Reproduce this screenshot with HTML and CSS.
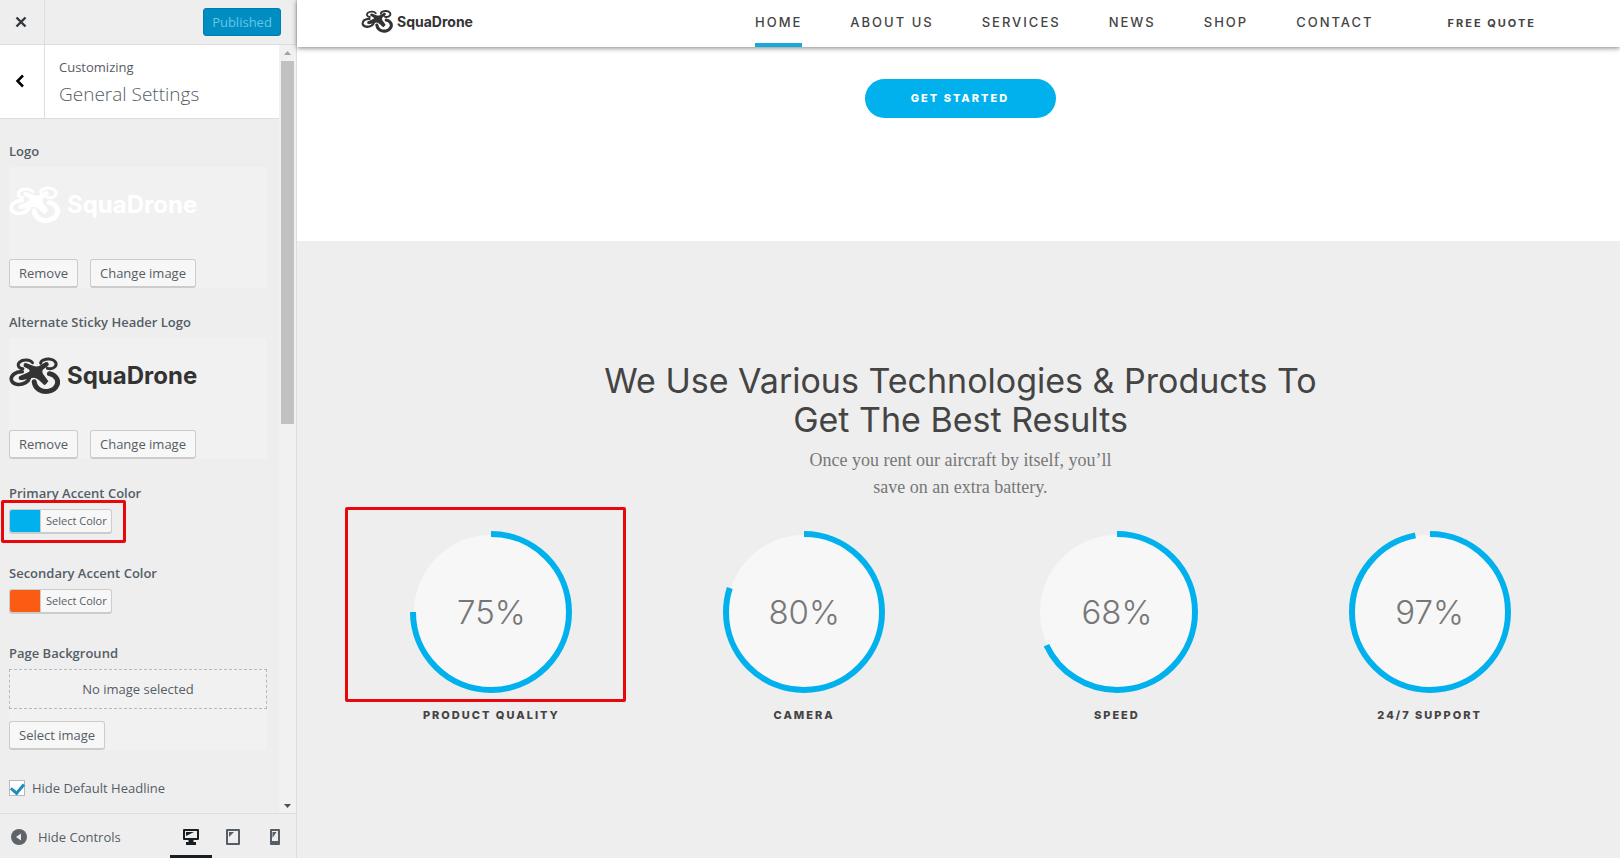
FILE: index.html
```html
<!DOCTYPE html>
<html lang="en">
<head>
<meta charset="utf-8">
<title>Customize: SquaDrone</title>
<link rel="stylesheet" href="styles.css">
</head>
<body>
<svg class="defs" aria-hidden="true">
  <symbol id="drone" viewBox="10 16 154 112">
    <g fill="none" stroke="currentColor" stroke-linecap="round" stroke-linejoin="round">
      <path stroke-width="9" d="M81 32C74 22 52 21 42 30C34 38 38 49 52 50"/>
      <path stroke-width="9" d="M106 34C104 26 119 20 133 21C151 23 157 36 148 45C143 50 134 51 126 49"/>
      <path stroke-width="11" d="M50 59C30 58 15 70 17 83C20 98 43 102 60 92C66 88 70 84 71 79"/>
      <path stroke-width="15" d="M132 65C152 69 162 86 154 101C146 119 118 124 101 113C92 107 87 98 86 89"/>
      <path stroke-width="12" d="M60 39L84 53M124 36L101 53M45 78L82 61M119 91L98 64"/>
    </g>
    <path fill="currentColor" d="M64 34L83 41Q94 46 104 40L121 30L129 40L114 51Q108 57 113 66L129 88L117 100L101 85Q91 75 80 78L48 85L41 73L66 64Q77 58 69 50L54 43Z"/>
  </symbol>
</svg>
<div class="app">
  <aside class="sidebar">
    <header class="bar">
      <button class="close" aria-label="Close"><svg width="12" height="12" viewBox="0 0 12 12"><path d="M1.500 1.500l9 9M10.500 1.500l-9 9" stroke="#32373c" stroke-width="2.400"/></svg></button>
      <button class="published" disabled>Published</button>
    </header>
    <div class="panel">
      <div class="controls">
        <div class="panel-title">
          <button class="back" aria-label="Back"><svg width="10" height="14" viewBox="0 0 10 14"><path d="M8 1.500L2.500 7L8 12.500" fill="none" stroke="#000" stroke-width="2.500"/></svg></button>
          <h1><span>Customizing</span>General Settings</h1>
        </div>
        <div class="list">
          <section class="control">
            <h2>Logo</h2>
            <div class="media">
              <div class="brand brand-light"><svg class="mark"><use href="#drone"/></svg><span>SquaDrone</span></div>
              <div class="actions"><button class="btn">Remove</button><button class="btn">Change image</button></div>
            </div>
          </section>
          <section class="control">
            <h2>Alternate Sticky Header Logo</h2>
            <div class="media">
              <div class="brand"><svg class="mark"><use href="#drone"/></svg><span>SquaDrone</span></div>
              <div class="actions"><button class="btn">Remove</button><button class="btn">Change image</button></div>
            </div>
          </section>
          <section class="control">
            <h2>Primary Accent Color</h2>
            <div class="picker"><button class="color"><span class="swatch blue"></span>Select Color</button><i class="outline"></i></div>
          </section>
          <section class="control">
            <h2>Secondary Accent Color</h2>
            <div class="picker"><button class="color"><span class="swatch orange"></span>Select Color</button></div>
          </section>
          <section class="control">
            <h2>Page Background</h2>
            <div class="media">
              <div class="placeholder">No image selected</div>
              <button class="btn">Select image</button>
            </div>
          </section>
          <label class="check" for="headline"><input type="checkbox" id="headline" checked>Hide Default Headline</label>
        </div>
      </div>
      <div class="scrollbar" aria-hidden="true">
        <svg width="7" height="4" viewBox="0 0 7 4"><path d="M0 4L3.500 0L7 4z" fill="#a3a3a3"/></svg>
        <div class="thumb"></div>
        <svg width="7" height="4" viewBox="0 0 7 4"><path d="M0 0h7L3.500 4z" fill="#505050"/></svg>
      </div>
    </div>
    <footer class="footer">
      <button class="collapse"><svg width="16" height="16" viewBox="0 0 16 16"><circle cx="8" cy="8" r="8" fill="#5f646a"/><path d="M10 4.500v7L5 8z" fill="#eee"/></svg>Hide Controls</button>
      <div class="devices">
        <button class="device active" aria-label="Desktop"><svg width="16" height="16" viewBox="0 0 16 16"><path fill="#191e23" fill-rule="evenodd" d="M1 0h14q1 0 1 1v9q0 1-1 1h-4.500v2H13v3H3v-3h2.500v-2H1q-1 0-1-1V1q0-1 1-1zM2 2v7h12V2z"/><path d="M3 3h8L3 7z" fill="#191e23"/></svg></button>
        <button class="device" aria-label="Tablet"><svg width="16" height="16" viewBox="0 0 16 16"><path fill="#555d66" fill-rule="evenodd" d="M2 0h12q1 0 1 1v14q0 1-1 1H2q-1 0-1-1V1q0-1 1-1zM3 2v12h10V2z"/><path d="M4 3h5L4 8z" fill="#555d66"/></svg></button>
        <button class="device" aria-label="Mobile"><svg width="16" height="16" viewBox="0 0 16 16"><path fill="#555d66" fill-rule="evenodd" d="M4 0h8q1 0 1 1v14q0 1-1 1H4q-1 0-1-1V1q0-1 1-1zM5 2v10h6V2z"/><path d="M5.500 3h4L5.500 9z" fill="#555d66"/></svg></button>
      </div>
    </footer>
  </aside>
  <main class="preview">
    <header class="site-header">
      <a class="brand brand-small" href="#"><svg class="mark"><use href="#drone"/></svg><span>SquaDrone</span></a>
      <nav>
        <a class="current" href="#">Home</a><a href="#">About us</a><a href="#">Services</a><a href="#">News</a><a href="#">Shop</a><a href="#">Contact</a>
      </nav>
      <a class="quote" href="#">Free quote</a>
    </header>
    <section class="hero"><a class="cta" href="#">Get started</a></section>
    <section class="stats">
      <h2>We Use Various Technologies &amp; Products To<br>Get The Best Results</h2>
      <p>Once you rent our aircraft by itself, you’ll<br>save on an extra battery.</p>
      <div class="charts">
        <figure>
          <div class="ring"><svg viewBox="0 0 162 162"><circle class="disc" cx="81" cy="81" r="77"/><circle class="arc" cx="81" cy="81" r="78" transform="rotate(-90 81 81)" pathLength="100" stroke-dasharray="75 25"/></svg><span>75%</span></div>
          <figcaption>Product quality</figcaption><i class="outline"></i>
        </figure>
        <figure>
          <div class="ring"><svg viewBox="0 0 162 162"><circle class="disc" cx="81" cy="81" r="77"/><circle class="arc" cx="81" cy="81" r="78" transform="rotate(-90 81 81)" pathLength="100" stroke-dasharray="80 20"/></svg><span>80%</span></div>
          <figcaption>Camera</figcaption>
        </figure>
        <figure>
          <div class="ring"><svg viewBox="0 0 162 162"><circle class="disc" cx="81" cy="81" r="77"/><circle class="arc" cx="81" cy="81" r="78" transform="rotate(-90 81 81)" pathLength="100" stroke-dasharray="68 32"/></svg><span>68%</span></div>
          <figcaption>Speed</figcaption>
        </figure>
        <figure>
          <div class="ring"><svg viewBox="0 0 162 162"><circle class="disc" cx="81" cy="81" r="77"/><circle class="arc" cx="81" cy="81" r="78" transform="rotate(-90 81 81)" pathLength="100" stroke-dasharray="97 3"/></svg><span>97%</span></div>
          <figcaption>24/7 support</figcaption>
        </figure>
      </div>
    </section>
  </main>
</div>
</body>
</html>
```
FILE: styles.css
```css
* { box-sizing: border-box; }
body { margin: 0; font: 13px/24px "Open Sans", "Noto Sans", sans-serif; color: #555d66; }
button { font: inherit; color: inherit; margin: 0; padding: 0; border: 0; background: none; }
h1, h2, p, figure { margin: 0; font-weight: 400; }
a { color: inherit; text-decoration: none; }
svg { display: block; }
.defs { position: absolute; width: 0; height: 0; }
.app { display: flex; min-height: 100vh; }

.sidebar { width: 297px; flex: none; display: flex; flex-direction: column; background: #eee; border-right: 1px solid #ddd; }
.bar { display: flex; justify-content: space-between; align-items: center; height: 45px; padding-right: 15px; border-bottom: 1px solid #ddd; }
.close { width: 45px; height: 44px; display: grid; place-items: center; padding-right: 3px; border-right: 1px solid #ddd; }
.published { width: 78px; height: 28px; background: #008ec2; border: 1px solid #007cb2; border-radius: 3px; color: #66c6e4; }
.panel { flex: 1; display: flex; }
.controls { flex: 1; }
.panel-title { display: flex; height: 74px; background: #fff; border-bottom: 1px solid #ddd; }
.back { width: 45px; display: grid; place-items: center; padding-right: 4px; padding-bottom: 2px; border-right: 1px solid #ddd; }
.panel-title h1 { padding: 10px 0 0 14px; font-size: 19px; line-height: 30px; font-weight: 300; }
.panel-title span { display: block; font-size: 13px; line-height: 24px; font-weight: 400; }
.list { padding: 20px 12px 13px 9px; }
.control { margin-bottom: 22px; }
.control h2 { font-size: 13px; font-weight: 600; line-height: 24px; margin-bottom: 4px; }
.media { background: #f1f1f1; }
.media .brand { height: 74px; margin-bottom: 18px; padding-top: 1px; }
.actions { display: flex; gap: 12px; }
.btn { display: block; height: 29px; padding: 0 9px; background: #f7f7f7; border: 1px solid #ccc; border-bottom-width: 2px; border-radius: 3px; }
.picker { position: relative; height: 30px; }
.color { display: flex; height: 25px; padding-right: 4px; background: #f7f7f7; border: 1px solid #ccc; border-bottom-width: 2px; border-radius: 3px; font-size: 11px; line-height: 22px; }
.swatch { width: 31px; height: 22px; margin-right: 5px; border-radius: 2px 0 0 2px; border-right: 1px solid #ccc; }
.blue { background: #00b1ee; }
.orange { background: #fb5c13; }
.outline { position: absolute; border: 3px solid #e8070a; border-radius: 2px; }
.picker .outline { left: -8px; top: -9px; width: 125px; height: 43px; }
.placeholder { height: 40px; margin-bottom: 12px; border: 1px dashed #b4b9be; text-align: center; line-height: 38px; }
.check { display: flex; align-items: center; gap: 7px; padding-top: 4px; }
.check input { appearance: none; width: 16px; height: 16px; margin: 0; border: 1px solid #b4b9be; background: #fff; display: grid; place-items: center; }
.check input:checked::before { content: ""; width: 6px; height: 10px; margin-bottom: 3px; border: solid #1e8cbe; border-width: 0 3px 3px 0; rotate: 40deg; }
.scrollbar { width: 17px; display: flex; flex-direction: column; align-items: center; padding: 6px 0 5px; background: #f1f1f1; }
.thumb { width: 13px; height: 363px; margin: 6px 0 auto; background: #c1c1c1; }
.footer { display: flex; justify-content: space-between; height: 45px; border-top: 1px solid #ddd; }
.collapse { display: flex; align-items: center; gap: 11px; padding: 2px 0 0 11px; }
.devices { display: flex; }
.device { width: 42px; display: grid; place-items: center; padding-top: 5px; border-bottom: 3px solid transparent; }
.active { border-color: #191e23; }

.brand { display: flex; align-items: center; gap: 7px; color: #333; font: 700 24px/36px Inter, sans-serif; }
.brand .mark { width: 51px; height: 38px; }
.brand-light { color: #fff; }
.preview { flex: 1; display: flex; flex-direction: column; background: #fff; font-family: Inter, sans-serif; color: #444; }
.site-header { display: flex; align-items: center; height: 47px; padding: 0 84px 0 64px; position: relative; box-shadow: 0 1px 5px rgba(0,0,0,.5); text-transform: uppercase; }
.brand.brand-small { gap: 4px; font-size: 14px; text-transform: none; padding-bottom: 4px; }
.brand-small .mark { width: 32px; height: 23px; }
nav { display: flex; gap: 48px; margin-left: auto; align-self: stretch; }
nav a { padding-top: 1px; height: 47px; line-height: 43px; font-size: 13px; font-weight: 500; letter-spacing: 2px; }
nav .current { border-bottom: 4px solid #16a9d9; }
.quote { margin-left: 74px; line-height: 45px; padding-bottom: 1px; font-size: 11px; font-weight: 700; letter-spacing: 2px; }
.hero { height: 194px; padding-top: 32px; display: flex; justify-content: center; align-items: flex-start; }
.cta { width: 191px; height: 39px; border-radius: 20px; background: #00b1ee; color: #fff; text-align: center; text-transform: uppercase; font-size: 11px; font-weight: 800; line-height: 38px; letter-spacing: 2px; margin-left: 3px; }
.stats { flex: 1; padding: 120px 34px 0 38px; background: #eee; text-align: center; }
.stats h2 { font-size: 34px; line-height: 39px; font-weight: 400; }
.stats p { margin-top: 8px; font: 18px/27px "Liberation Serif", serif; color: #777; }
.charts { display: grid; grid-template-columns: repeat(4, 1fr); margin-top: 30px; }
.charts figure { position: relative; display: flex; flex-direction: column; align-items: center; }
.ring { display: grid; place-items: center; width: 162px; height: 162px; }
.ring > * { grid-area: 1 / 1; }
.ring svg { width: 162px; height: 162px; }
.ring span { font-size: 33px; font-weight: 300; line-height: 40px; color: #777; }
.disc { fill: #f7f7f7; }
.arc { fill: none; stroke: #00b1ee; stroke-width: 6; }
.charts figcaption { margin-top: 10px; font-size: 11px; line-height: 24px; font-weight: 800; letter-spacing: 2px; text-transform: uppercase; }
.charts .outline { left: 10px; right: 22px; top: -24px; height: 195px; }
```
